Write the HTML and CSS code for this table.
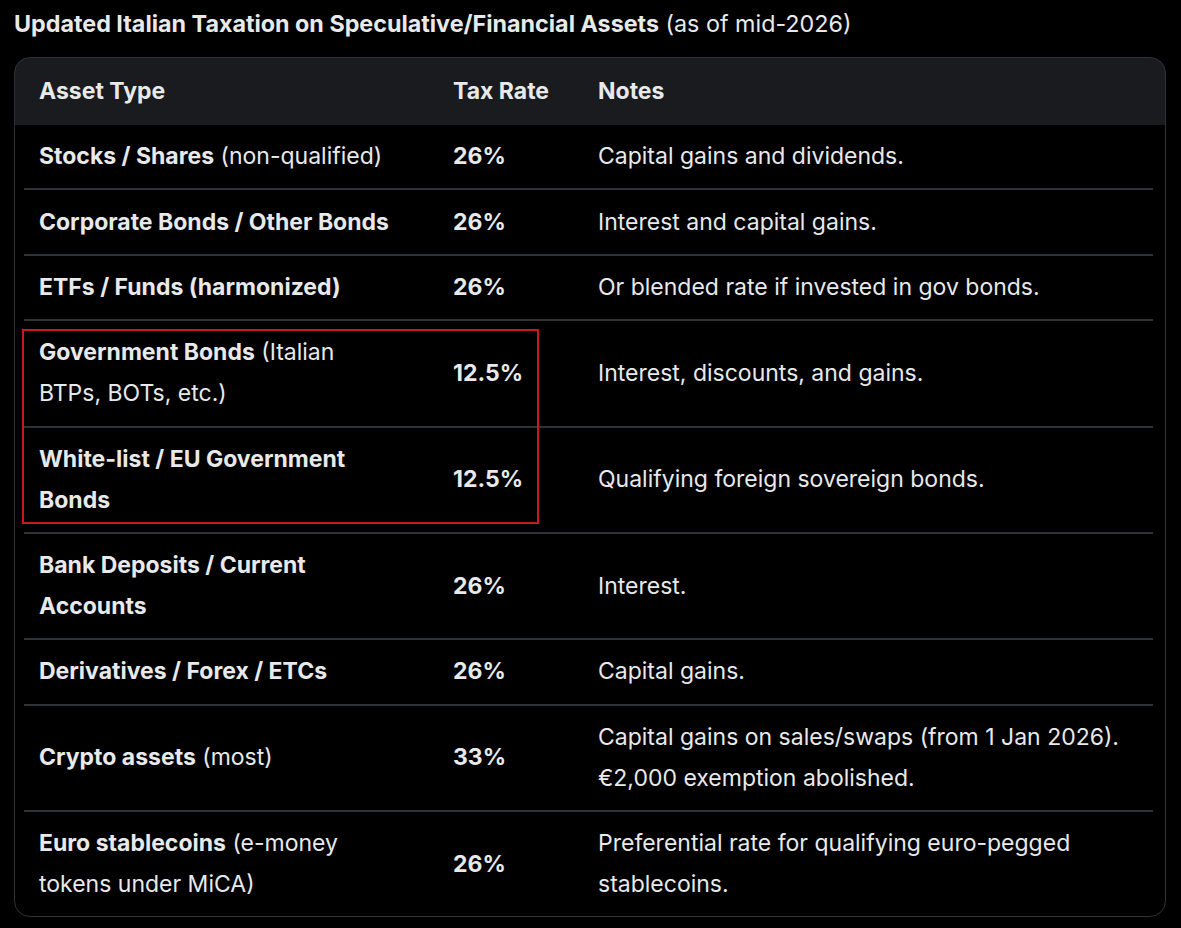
FILE: index.html
```html
<!DOCTYPE html>
<html lang="en">
<head>
<meta charset="utf-8">
<title>Italian Taxation</title>
<link rel="stylesheet" href="styles.css">
</head>
<body>
<h1 class="title"><strong>Updated Italian Taxation on Speculative/Financial Assets</strong> (as of mid-2026)</h1>
<div class="table-wrap">
  <table class="tax-table">
    <colgroup>
      <col class="c1"><col class="c2"><col class="c3">
    </colgroup>
    <thead>
      <tr><th>Asset Type</th><th>Tax Rate</th><th>Notes</th></tr>
    </thead>
    <tbody>
      <tr><td><b>Stocks / Shares</b> (non-qualified)</td><td><b>26%</b></td><td>Capital gains and dividends.</td></tr>
      <tr><td><b>Corporate Bonds / Other Bonds</b></td><td><b>26%</b></td><td>Interest and capital gains.</td></tr>
      <tr><td><b>ETFs / Funds (harmonized)</b></td><td><b>26%</b></td><td>Or blended rate if invested in gov bonds.</td></tr>
      <tr><td><b>Government Bonds</b> (Italian BTPs, BOTs, etc.)</td><td><b>12.5%</b></td><td>Interest, discounts, and gains.</td></tr>
      <tr><td><b>White-list / EU Government Bonds</b></td><td><b>12.5%</b></td><td>Qualifying foreign sovereign bonds.</td></tr>
      <tr><td><b>Bank Deposits / Current Accounts</b></td><td><b>26%</b></td><td>Interest.</td></tr>
      <tr><td><b>Derivatives / Forex / ETCs</b></td><td><b>26%</b></td><td>Capital gains.</td></tr>
      <tr><td><b>Crypto assets</b> (most)</td><td><b>33%</b></td><td>Capital gains on sales/swaps (from 1 Jan 2026). €2,000 exemption abolished.</td></tr>
      <tr><td><b>Euro stablecoins</b> (e-money tokens under MiCA)</td><td><b>26%</b></td><td>Preferential rate for qualifying euro-pegged stablecoins.</td></tr>
    </tbody>
  </table>
  <div class="highlight"></div>
</div>
</body>
</html>
```
FILE: styles.css
```css
html, body {
  margin: 0;
  background: #000;
}
body {
  padding: 4px 15px 10px 14px;
  color: #e7e9ea;
  font-family: Inter, "Noto Sans", "DejaVu Sans", sans-serif;
}
.title {
  margin: 0 0 13px 0;
  font-size: 23.3px;
  font-weight: 400;
  line-height: 40px;
  color: #e7e9ea;
  white-space: nowrap;
}
.title strong {
  font-weight: 700;
}
.table-wrap {
  position: relative;
  border: 1px solid #2f3336;
  border-radius: 16px;
  padding: 0 12px 0 9px;
  background: linear-gradient(#1a1b1e 0, #1a1b1e 67px, #000 67px);
  overflow: hidden;
}
.tax-table {
  width: 100%;
  border-collapse: collapse;
  table-layout: fixed;
  font-size: 23px;
  line-height: 41px;
}
.c1 { width: 414px; }
.c2 { width: 145px; }
.tax-table th {
  text-align: left;
  font-weight: 700;
  padding: 13px 15px 13px 15px;
  color: #e7e9ea;
}
.tax-table td {
  padding: 11.2px 15px 11.2px 15px;
  vertical-align: middle;
  border-bottom: 2px solid #2f3336;
  color: #e7e9ea;
}
.tax-table td:first-child {
  padding-right: 43px;
}
.tax-table tbody tr:last-child td {
  border-bottom: none;
}
.tax-table b {
  font-weight: 700;
}
.highlight {
  position: absolute;
  left: 7px;
  top: 271px;
  width: 513px;
  height: 191px;
  border: 2px solid #c9191f;
  pointer-events: none;
}
```
